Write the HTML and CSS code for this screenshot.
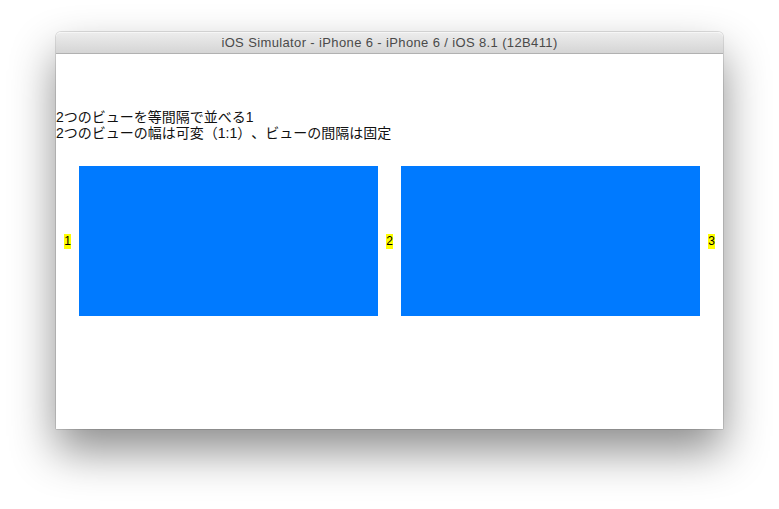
FILE: index.html
```html
<!DOCTYPE html>
<html lang="ja">
<head>
<meta charset="utf-8">
<title>iOS Simulator</title>
<link rel="stylesheet" href="styles.css">
</head>
<body>
<div class="window">
  <div class="titlebar">iOS Simulator - iPhone 6 - iPhone 6 / iOS 8.1 (12B411)</div>
  <div class="screen">
    <div class="caption">
      <div>2つのビューを等間隔で並べる1</div>
      <div>2つのビューの幅は可変（1:1）、ビューの間隔は固定</div>
    </div>
    <div class="row">
      <span class="tag">1</span>
      <div class="box"></div>
      <span class="tag">2</span>
      <div class="box"></div>
      <span class="tag">3</span>
    </div>
  </div>
</div>
</body>
</html>
```
FILE: styles.css
```css
html, body {
  margin: 0;
  padding: 0;
  background: #ffffff;
}
body {
  padding-top: 32px;
  height: 509px;
  box-sizing: border-box;
  overflow: hidden;
}
.window {
  margin-left: 56px;
  width: 667px;
  border-radius: 5px 5px 1px 1px;
  box-shadow: 0 22px 45px rgba(0, 0, 0, 0.45), 0 0 0 1px rgba(0, 0, 0, 0.12);
  background: #fff;
}
.titlebar {
  height: 22px;
  box-sizing: border-box;
  border-radius: 5px 5px 0 0;
  background: linear-gradient(#ececec, #d5d5d5);
  border-top: 1px solid #f6f6f6;
  border-bottom: 1px solid #b1b1b1;
  font-family: "Liberation Sans", Arial, sans-serif;
  font-size: 13px;
  letter-spacing: 0.37px;
  line-height: 20px;
  color: #4a4a4a;
  text-align: center;
}
.screen {
  height: 375px;
  padding-top: 55px;
  box-sizing: border-box;
  background: #fff;
}
.caption {
  font-family: "Liberation Sans", "Noto Sans CJK JP", sans-serif;
  font-size: 14px;
  line-height: 16px;
  color: #111;
  text-spacing-trim: space-all;
  font-feature-settings: "palt" 0, "halt" 0;
}
.row {
  display: flex;
  align-items: center;
  gap: 8px;
  padding: 0 8px;
  margin-top: 25px;
}
.tag {
  flex: 0 0 7px;
  width: 7px;
  background: #ffff00;
  font-family: "Liberation Sans", Arial, sans-serif;
  font-size: 12px;
  line-height: 15px;
  text-align: center;
  color: #000;
}
.box {
  flex: 0 0 299px;
  height: 150px;
  background: #007aff;
}
```
